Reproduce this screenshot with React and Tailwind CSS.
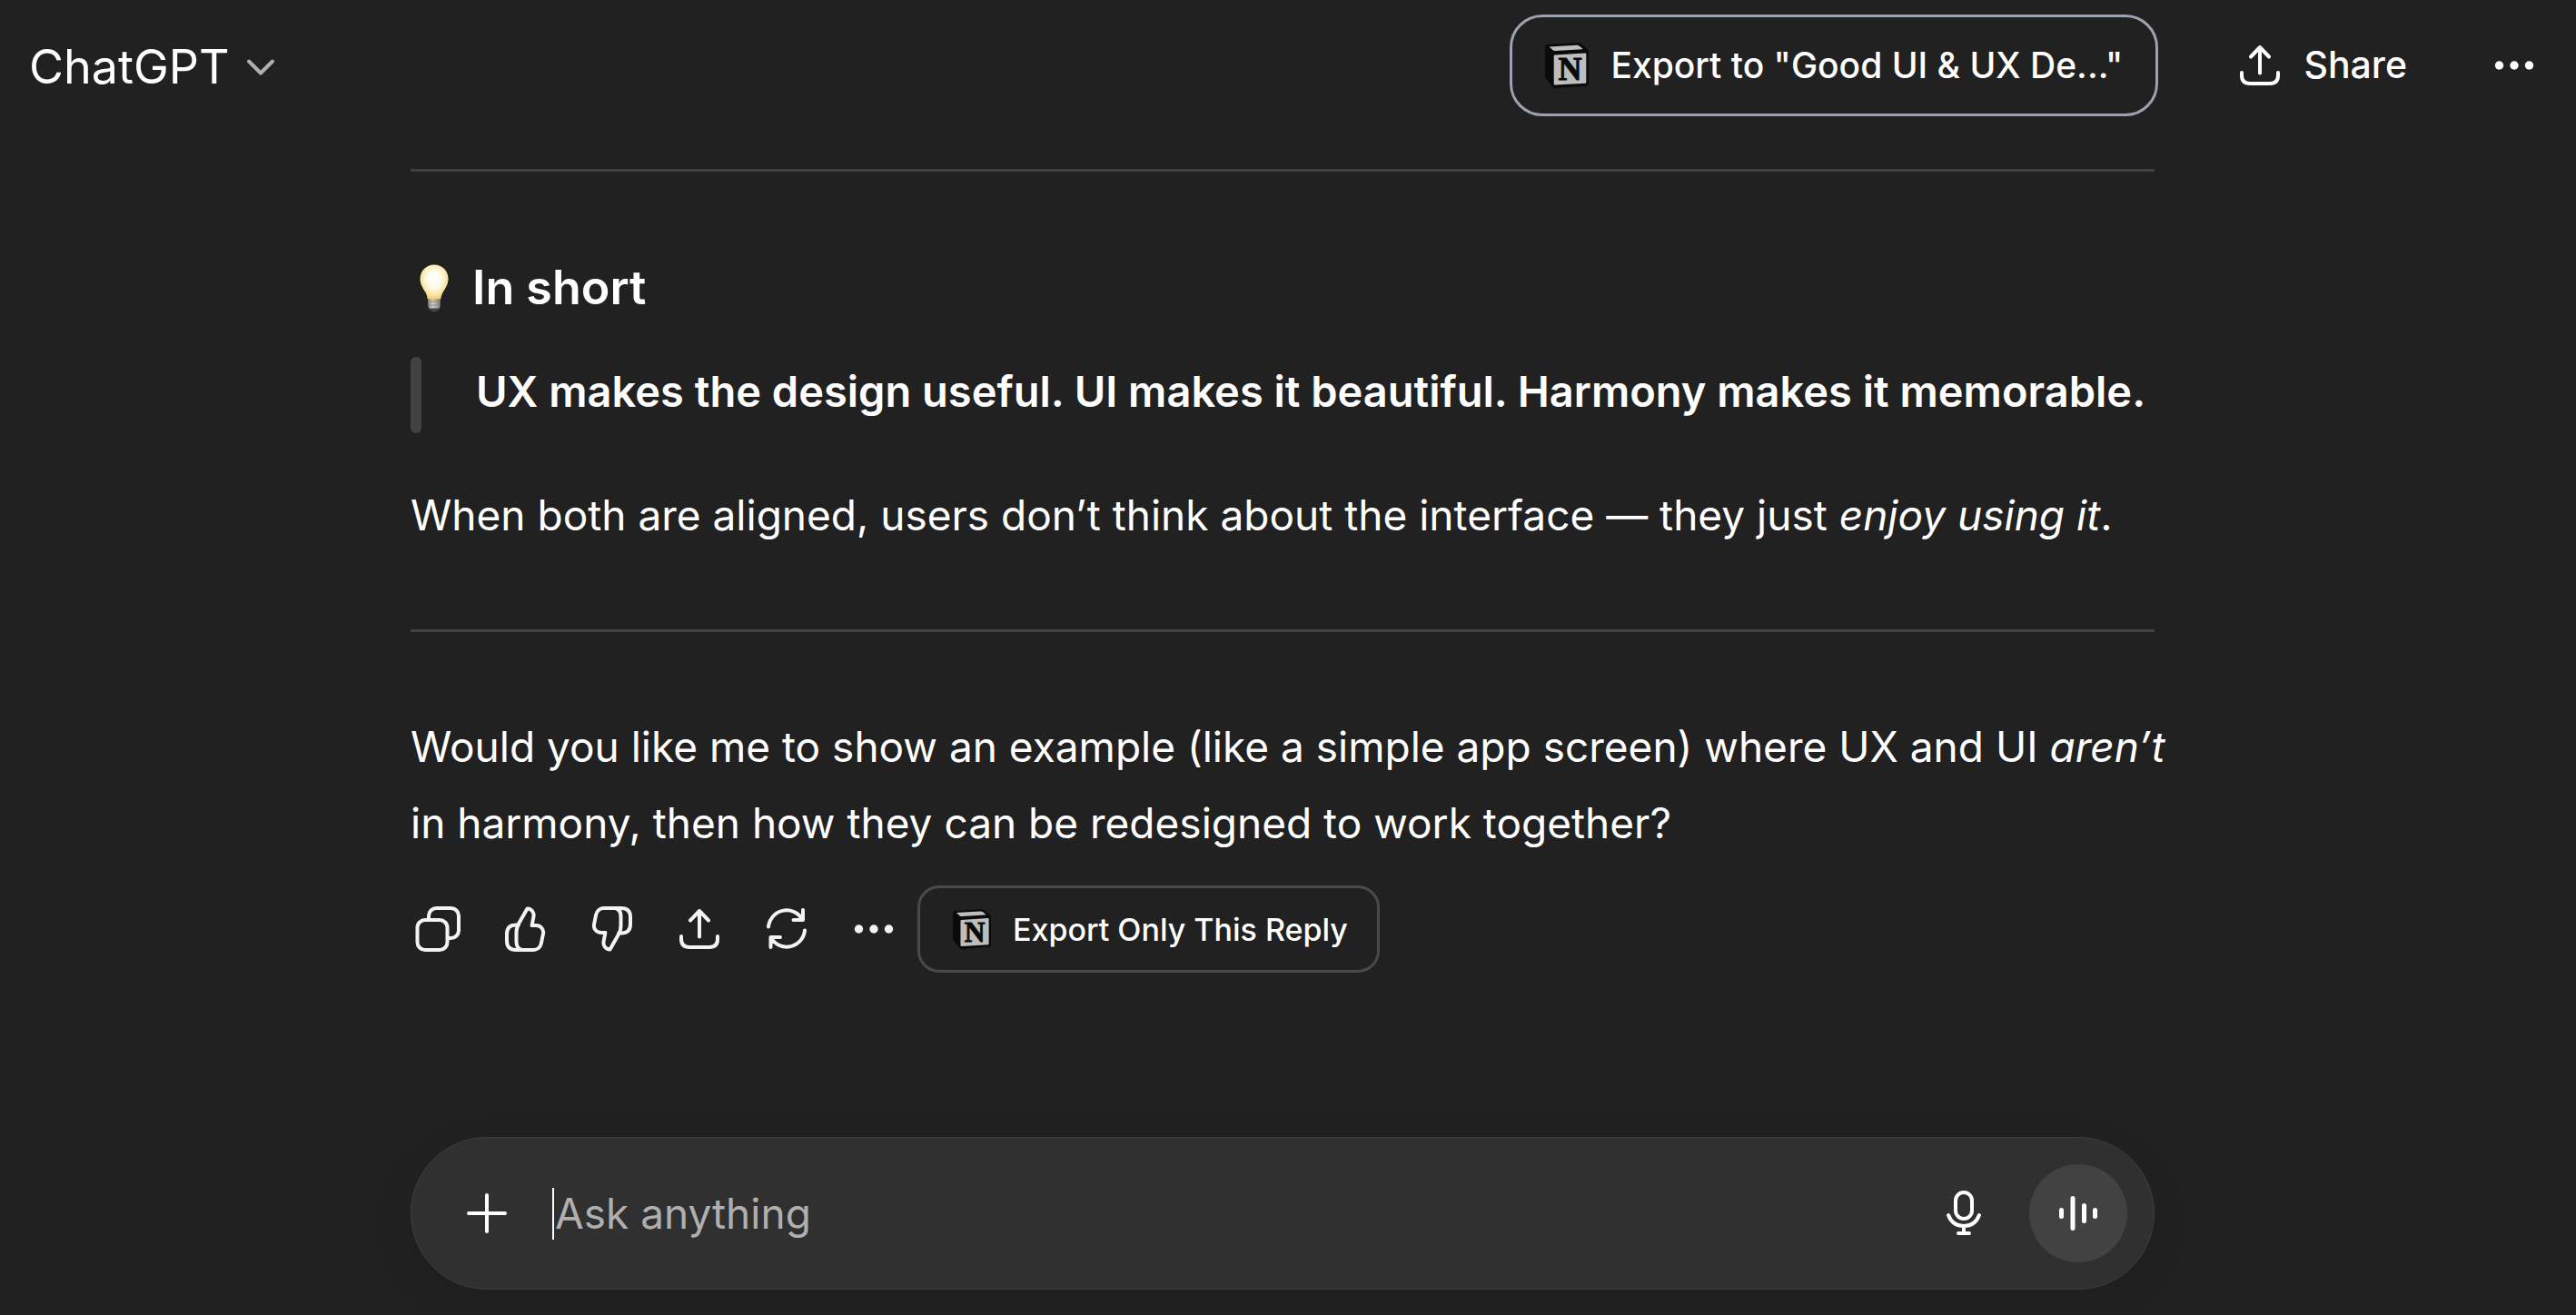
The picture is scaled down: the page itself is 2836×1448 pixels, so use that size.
import { useState } from "react";

const BODY = "text-[46px] leading-[84px]";

function Icon({ children, className = "" }) {
  return (
    <svg
      viewBox="0 0 60 60"
      fill="none"
      stroke="currentColor"
      strokeWidth="4"
      strokeLinecap="round"
      strokeLinejoin="round"
      aria-hidden="true"
      className={`size-[60px] shrink-0 ${className}`}
    >
      {children}
    </svg>
  );
}

function CopyIcon() {
  return (
    <Icon>
      <rect x="7.5" y="20" width="33" height="33" rx="8.5" />
      <path d="M20 19v-3.500a8.500 8.500 0 0 1 8.500-8.500h16a8.500 8.500 0 0 1 8.500 8.500v16a8.500 8.500 0 0 1-8.500 8.500H41" />
    </Icon>
  );
}

function ThumbIcon({ className }) {
  return (
    <Icon className={className}>
      <path d="M22.500 25 32.500 7.500c5 .2 7.800 4.500 6.900 9L37.600 26H42c5.200 0 8.900 4.200 8 9.200l-2.200 10.600c-.9 4.400-4.300 7.200-8.800 7.200H20c-6.500 0-10-3.500-10-10v-7.500C10 29 13.500 25.500 20 25.500c1.200 0 1.900 0 2.500-.5z" />
      <path d="M27 53c-4.200-.8-6.500-4-6.500-9V34c0-3.500.5-6.500 2.500-9" />
    </Icon>
  );
}

function ShareIcon() {
  return (
    <Icon>
      <path d="M30 10v28.500M20 20.500l10-10.500 10 10.500M10 38v3c0 6 3 9 9 9h22c6 0 9-3 9-9v-3" />
    </Icon>
  );
}

function RetryIcon() {
  return (
    <Icon>
      <path d="M10 27.500A20 20 0 0 1 47 19M48 9v11H37.500M50 31.500A20 20 0 0 1 13 40M12.500 50V39H23" />
    </Icon>
  );
}

function DotsIcon() {
  return (
    <Icon>
      <g fill="currentColor" stroke="none">
        <circle cx="13.5" cy="30" r="4.7" />
        <circle cx="30" cy="30" r="4.7" />
        <circle cx="46.5" cy="30" r="4.7" />
      </g>
    </Icon>
  );
}

function NotionIcon({ className }) {
  return (
    <svg viewBox="0 0 48 50" aria-hidden="true" className={`shrink-0 ${className}`}>
      <path
        d="M3 2 35 0c2 0 3 .3 4.500 1.400l6.500 5C47.500 7.500 48 8 48 10v34c0 2.500-1 3.500-3.500 3.700L12 50c-2 .1-3-.3-4.200-1.800L1.300 40C.3 38.600 0 37.600 0 36V5c0-1.800 1-2.900 3-3z"
        fill="#0a0a0a"
      />
      <path d="M4.500 4.500 34.500 2.700c1.500 0 2.300.2 3.300 1L41 6.200c.8.700.4 1-.5 1.100L11.500 9c-1.300 0-2-.2-3-1z" fill="#bdbdbd" />
      <path d="M11 13.500 44 11.400c1 0 1.300.4 1.300 1.300v30.500c0 1-.4 1.500-1.300 1.600L11 46.600c-.9 0-1.300-.4-1.300-1.300V15c0-1 .4-1.500 1.300-1.500z" fill="#bdbdbd" />
      <text
        x="27.500"
        y="41"
        textAnchor="middle"
        fontSize="36"
        fontWeight="700"
        fill="#0a0a0a"
        stroke="#0a0a0a"
        strokeWidth="1"
        fontFamily="'Liberation Serif', serif"
      >
        N
      </text>
    </svg>
  );
}

function BulbIcon() {
  return (
    <svg viewBox="0 0 32 52" aria-hidden="true" className="h-[52px] w-8 shrink-0">
      <defs>
        <radialGradient id="glass" cx="50%" cy="42%" r="58%">
          <stop offset="0" stopColor="#ffffff" />
          <stop offset=".45" stopColor="#fffbea" />
          <stop offset=".8" stopColor="#f9e5a0" />
          <stop offset="1" stopColor="#eecf7c" />
        </radialGradient>
        <linearGradient id="cap">
          <stop offset="0" stopColor="#8b8781" />
          <stop offset=".4" stopColor="#d0ccc5" />
          <stop offset="1" stopColor="#7d7a75" />
        </linearGradient>
      </defs>
      <path d="M9 37h14l-.5 9c-.3 3-2.500 5.500-6.500 5.500S9.800 49 9.500 46z" fill="url(#cap)" />
      <path d="M10 48.500h12c-1 2.300-3 3.300-6 3.300s-5-1-6-3.300z" fill="#45423f" />
      <path d="M9.300 41.500l13.400-1M9.500 45.500l13-1" stroke="#8d8983" strokeWidth="1" />
      <path d="M16 .5C7 .5.500 7.500.500 16c0 6 3.200 10.500 5.700 14.500 1.300 2.200 2 4.500 2.400 7.500h14.800c.4-3 1.100-5.300 2.400-7.500C28.300 26.500 31.500 22 31.500 16 31.500 7.500 25 .5 16 .5z" fill="url(#glass)" />
    </svg>
  );
}

function ActionButton({ label, children }) {
  return (
    <button type="button" aria-label={label} className="flex size-24 shrink-0 items-center justify-center rounded-3xl">
      {children}
    </button>
  );
}

export default function App() {
  const [message, setMessage] = useState("");

  return (
    <div className="flex min-h-screen flex-col bg-[#212121] font-['Inter','Liberation_Sans',sans-serif] text-white">

      {/* HEADER */}
      <header className="flex h-36 items-center justify-between pl-8 pr-3.5">

        <button type="button" className="flex items-center gap-2.5 pt-1 text-[52px] leading-[72px]">
          ChatGPT
          <svg
            viewBox="0 0 48 48"
            fill="none"
            stroke="#afafaf"
            strokeWidth="4"
            strokeLinecap="round"
            strokeLinejoin="round"
            aria-hidden="true"
            className="size-12"
          >
            <path d="M11 17.500 24 30.500 37 17.500" />
          </svg>
        </button>

        <div className="flex items-center">

          <button
            type="button"
            className="flex h-28 items-center gap-6 rounded-[36px] border-3 border-[#9ca3af] px-9 text-[39px] font-medium"
          >
            <NotionIcon className="h-[50px] w-12" />
            Export to "Good UI &amp; UX De..."
          </button>

          <button type="button" className="ml-[46px] flex h-27 items-center gap-[18px] px-9 text-[41px] font-medium">
            <ShareIcon />
            Share
          </button>

          <button type="button" aria-label="More options" className="ml-7 flex size-27 items-center justify-center">
            <DotsIcon />
          </button>

        </div>

      </header>

      <div className="flex grow flex-col pb-7 pr-3">

        {/* REPLY */}
        <main className="mx-auto w-full max-w-[1920px]">

          <hr className="mt-[42px] border-t-3 border-[#424242]" />

          <h3 className="mt-[91px] flex items-center gap-[26px] pl-2.5 text-[52px] leading-[73px] font-semibold">
            <BulbIcon />
            In short
          </h3>

          <blockquote className="mt-10 flex min-h-21 gap-[60px]">
            <span className="w-3 shrink-0 rounded-full bg-[#424242]" />
            <p className="text-[47px] leading-[76px] font-semibold">
              UX makes the design useful. UI makes it beautiful. Harmony makes it memorable.
            </p>
          </blockquote>

          <p className={`mt-12 ${BODY}`}>
            When both are aligned, users don’t think about the interface — they just <em>enjoy using it</em>.
          </p>

          <hr className="mt-21 border-t-3 border-[#424242]" />

          <p className={`-mr-4 mt-21 ${BODY}`}>
            Would you like me to show an example (like a simple app screen) where UX and UI <em>aren’t</em> in
            harmony, then how they can be redesigned to work together?
          </p>

          {/* ACTIONS */}
          <div className="-ml-[18px] mt-[27px] flex items-center text-[#f3f3f3]">
            <ActionButton label="Copy">
              <CopyIcon />
            </ActionButton>
            <ActionButton label="Good response">
              <ThumbIcon />
            </ActionButton>
            <ActionButton label="Bad response">
              <ThumbIcon className="rotate-180" />
            </ActionButton>
            <ActionButton label="Share">
              <ShareIcon />
            </ActionButton>
            <ActionButton label="Try again">
              <RetryIcon />
            </ActionButton>
            <ActionButton label="More actions">
              <DotsIcon />
            </ActionButton>

            <button
              type="button"
              className="flex h-24 items-center gap-6 rounded-3xl border-3 border-[#4a4a4a] pl-9 pr-8 text-[34px] font-medium text-white"
            >
              <NotionIcon className="h-[44px] w-[42px]" />
              Export Only This Reply
            </button>
          </div>

        </main>

        {/* COMPOSER */}
        <form
          onSubmit={(e) => e.preventDefault()}
          className="mx-auto mt-auto flex h-42 w-full max-w-[1920px] items-center rounded-full border border-[#3f3f3f] bg-[#303030] px-[29px] shadow-[0_12px_48px_rgba(0,0,0,0.08)]"
        >
          <button type="button" aria-label="Add files" className="flex size-27 shrink-0 items-center justify-center">
            <Icon>
              <path d="M30 10v40M10 30h40" />
            </Icon>
          </button>

          <span className="ml-[18px] mr-px h-[57px] w-0.5 shrink-0 bg-white" />
          <input
            type="text"
            aria-label="Message"
            placeholder="Ask anything"
            value={message}
            onChange={(e) => setMessage(e.target.value)}
            className={`${BODY} min-w-0 grow bg-transparent outline-none placeholder:text-[#afafaf]`}
          />

          <button type="button" aria-label="Dictate" className="flex size-27 shrink-0 items-center justify-center">
            <Icon>
              <rect x="21" y="7" width="18" height="29" rx="9" />
              <path d="M13 32c3 8 9.500 12 17 12s14-4 17-12M30 44v8M24 52h12" />
            </Icon>
          </button>

          <button
            type="button"
            aria-label="Voice mode"
            className="ml-[18px] flex size-27 shrink-0 items-center justify-center rounded-full bg-[#424242]"
          >
            <Icon>
              <path strokeWidth="5" d="M11.500 26.500v7M24 13.500v33M36.500 21.500v17M48.500 26.500v7" />
            </Icon>
          </button>
        </form>

      </div>
    </div>
  );
}
